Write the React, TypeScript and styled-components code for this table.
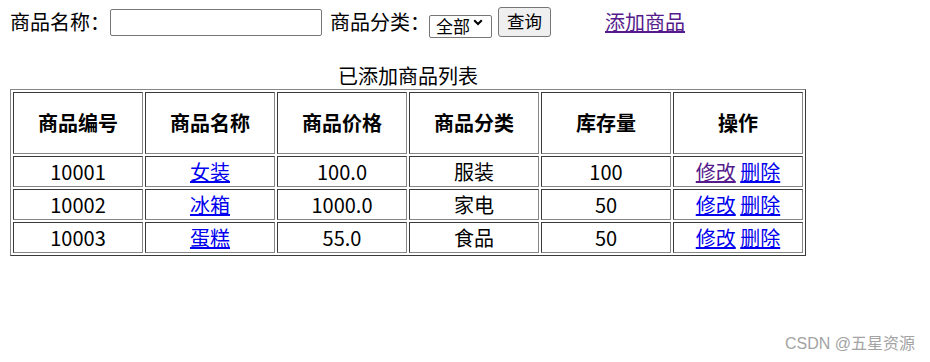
import React from "react";
import styled, { createGlobalStyle } from "styled-components";

const GlobalStyle = createGlobalStyle`
  html, body { margin: 0; padding: 0; background: #fff; }
  body { font-family: "Noto Sans CJK SC", "Noto Sans", sans-serif; color: #000; }
`;

const Page = styled.div`
  position: relative;
  width: 930px;
  height: 362px;
  box-sizing: border-box;
  padding: 6px 10px 0 10px;
  font-size: 20px;
`;

const Toolbar = styled.div`
  display: flex;
  align-items: center;
  height: 31px;
`;

const Label = styled.span<{ $ml?: number }>`
  font-size: 20px;
  line-height: 26px;
  margin-left: ${(p) => p.$ml ?? 0}px;
  white-space: nowrap;
`;

const TextInput = styled.input`
  box-sizing: border-box;
  width: 212px;
  height: 27px;
  margin: 2px 0 0 0;
  padding: 1px 3px;
  border: 1px solid #767676;
  border-radius: 2px;
  font-size: 16px;
  outline: none;
  background: #fff;
`;

const SelectWrap = styled.div<{ $ml?: number }>`
  position: relative;
  margin-left: ${(p) => p.$ml ?? 0}px;
  width: 63px;
  height: 23px;
`;

const Select = styled.select`
  appearance: none;
  -webkit-appearance: none;
  box-sizing: border-box;
  width: 63px;
  height: 23px;
  margin: 0;
  padding: 0 0 2px 6px;
  border: 1px solid #767676;
  border-radius: 2px;
  background: #fff;
  color: #000;
  font-family: "Noto Sans CJK SC", sans-serif;
  font-size: 17px;
  line-height: 19px;
`;

const Chevron = styled.svg`
  position: absolute;
  right: 9px;
  top: 9px;
  width: 10px;
  height: 7px;
  pointer-events: none;
`;

const Button = styled.button<{ $ml?: number }>`
  box-sizing: border-box;
  width: 53px;
  height: 30px;
  margin: 0 0 0 ${(p) => p.$ml ?? 0}px;
  padding: 0 0 2px 0;
  border: 1px solid #767676;
  border-radius: 3px;
  background: #efefef;
  color: #000;
  font-family: "Noto Sans CJK SC", sans-serif;
  font-size: 17.5px;
  line-height: 26px;
`;

const Link = styled.a<{ $visited?: boolean; $ml?: number }>`
  color: ${(p) => (p.$visited ? "#551a8b" : "#0000ee")};
  text-decoration: underline;
  margin-left: ${(p) => p.$ml ?? 0}px;
  cursor: pointer;
`;

const Table = styled.table`
  margin-top: 26px;
  width: 796px;
  table-layout: fixed;
  border-collapse: separate;
  border-spacing: 2px;
  border-style: solid;
  border-width: 1px;
  border-color: #868686 #3a3a3a #3a3a3a #868686;
  font-size: 20px;
`;

const Caption = styled.caption`
  line-height: 26px;
  text-align: center;
`;

const HeadCell = styled.th`
  padding: 1px;
  line-height: 58px;
  font-weight: bold;
  text-align: center;
  border-style: solid;
  border-width: 1px;
  border-color: #3a3a3a #868686 #868686 #3a3a3a;
`;

const Cell = styled.td`
  padding: 1px;
  line-height: 27px;
  text-align: center;
  white-space: nowrap;
  border-style: solid;
  border-width: 1px;
  border-color: #3a3a3a #868686 #868686 #3a3a3a;
`;

const Watermark = styled.div`
  position: absolute;
  right: 15px;
  bottom: 7px;
  font-family: "Liberation Sans", "Noto Sans CJK SC", sans-serif;
  font-size: 16px;
  line-height: 22px;
  color: #a3a3a3;
`;

const rows = [
  { id: "10001", name: "女装", price: "100.0", cat: "服装", stock: "100", visited: true },
  { id: "10002", name: "冰箱", price: "1000.0", cat: "家电", stock: "50", visited: false },
  { id: "10003", name: "蛋糕", price: "55.0", cat: "食品", stock: "50", visited: false },
];

export default function App() {
  return (
    <>
      <GlobalStyle />
      <Page>
        <Toolbar>
          <Label>商品名称：</Label>
          <TextInput type="text" />
          <Label $ml={8}>商品分类：</Label>
          <SelectWrap $ml={-1}>
            <Select defaultValue="all">
              <option value="all">全部</option>
              <option value="服装">服装</option>
              <option value="家电">家电</option>
              <option value="食品">食品</option>
            </Select>
            <Chevron viewBox="0 0 10 7">
              <path d="M1.2 1.2 L5 5 L8.8 1.2" fill="none" stroke="#000" strokeWidth="2" />
            </Chevron>
          </SelectWrap>
          <Button $ml={6}>查询</Button>
          <Label $ml={54}>
            <Link $visited>添加商品</Link>
          </Label>
        </Toolbar>
        <Table>
          <Caption>已添加商品列表</Caption>
          <thead>
            <tr>
              <HeadCell>商品编号</HeadCell>
              <HeadCell>商品名称</HeadCell>
              <HeadCell>商品价格</HeadCell>
              <HeadCell>商品分类</HeadCell>
              <HeadCell>库存量</HeadCell>
              <HeadCell>操作</HeadCell>
            </tr>
          </thead>
          <tbody>
            {rows.map((r) => (
              <tr key={r.id}>
                <Cell>{r.id}</Cell>
                <Cell>
                  <Link>{r.name}</Link>
                </Cell>
                <Cell>{r.price}</Cell>
                <Cell>{r.cat}</Cell>
                <Cell>{r.stock}</Cell>
                <Cell>
                  <Link $visited={r.visited}>修改</Link> <Link>删除</Link>
                </Cell>
              </tr>
            ))}
          </tbody>
        </Table>
        <Watermark>CSDN @五星资源</Watermark>
      </Page>
    </>
  );
}
